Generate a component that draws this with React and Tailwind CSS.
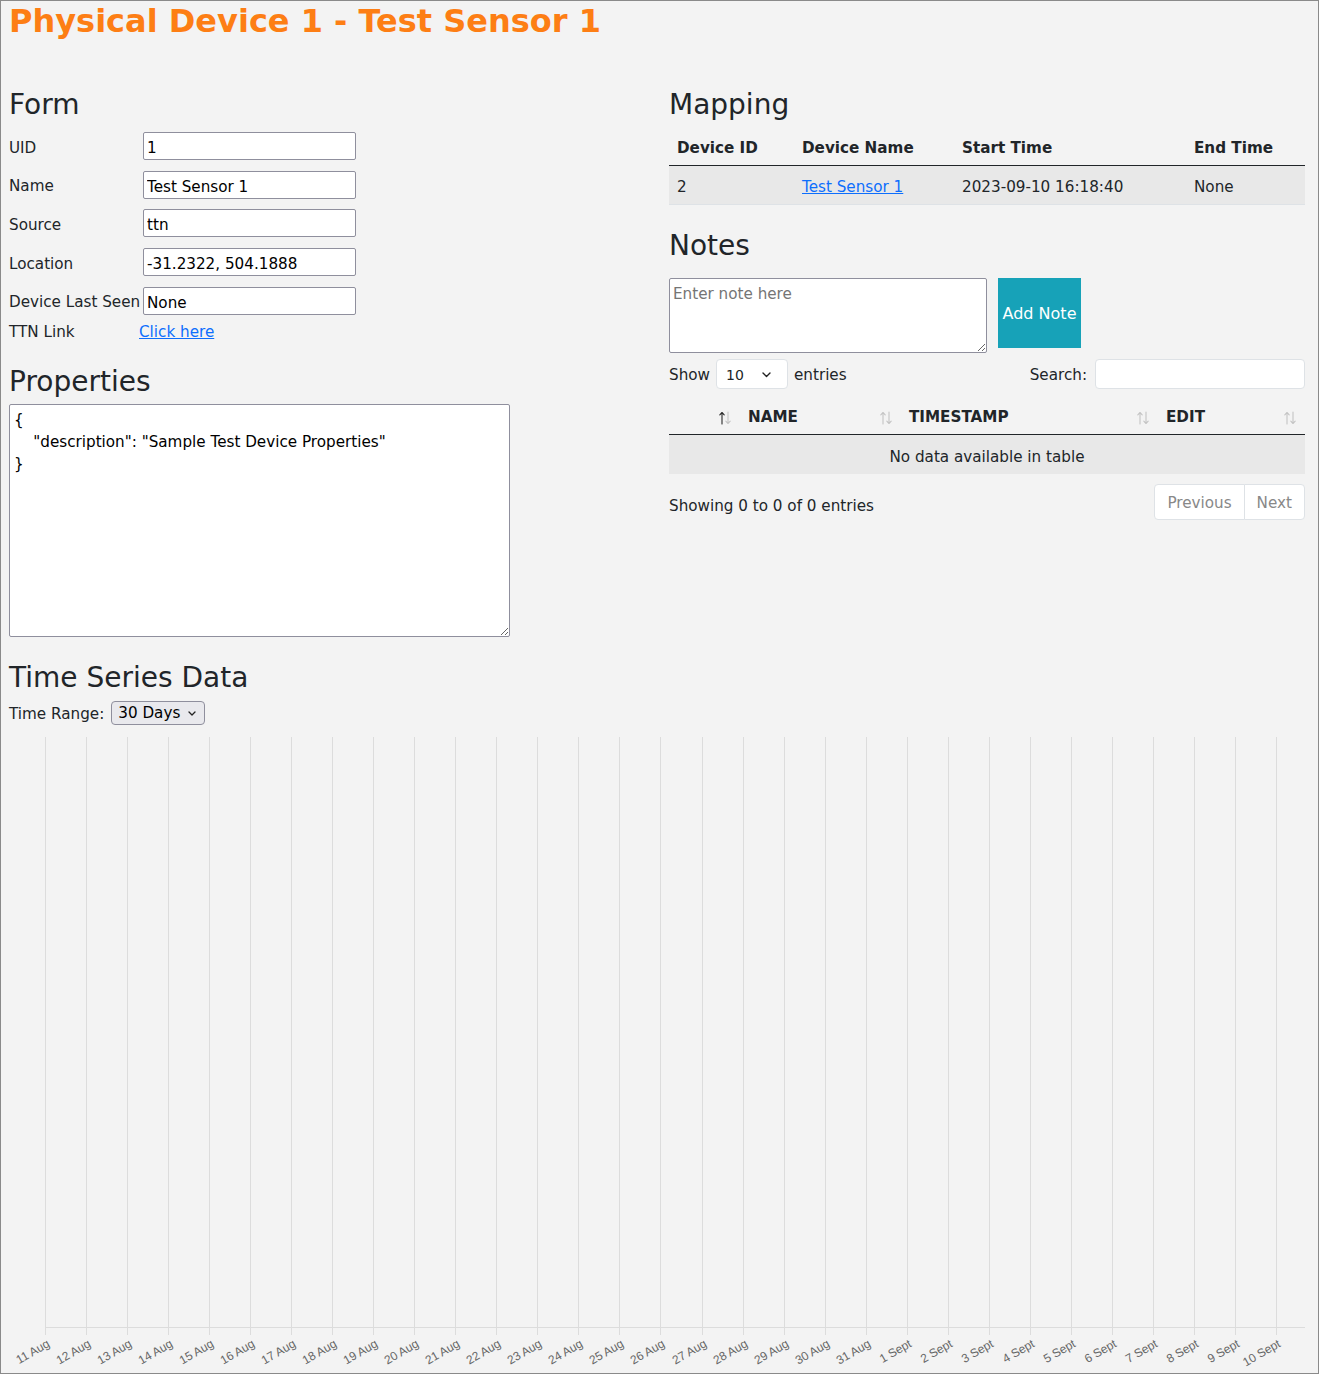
import React from 'react';

const labels = [
  ...Array.from({ length: 21 }, (_, i) => `${i + 11} Aug`),
  ...Array.from({ length: 10 }, (_, i) => `${i + 1} Sept`),
];

const formRows = [
  ['UID', '1'],
  ['Name', 'Test Sensor 1'],
  ['Source', 'ttn'],
  ['Location', '-31.2322, 504.1888'],
  ['Device Last Seen', 'None'],
];

const SortIcon = ({ active }) => (
  <svg width="14" height="14" viewBox="0 0 14 14" className="shrink-0 mt-[2px]">
    <g fill="none" strokeWidth="1.1" strokeLinecap="round" strokeLinejoin="round">
      <path d="M4 13V1.5M1.8 3.8 4 1.5 6.2 3.8" stroke={active ? '#2a2a2a' : '#c4c4c4'} />
      <path d="M10 1v11.5M7.8 10.2 10 12.5 12.2 10.2" stroke="#c4c4c4" />
    </g>
  </svg>
);

const Chevron = () => (
  <svg width="9" height="6" viewBox="0 0 9 6" className="shrink-0">
    <path d="M1 1l3.5 3.5L8 1" fill="none" stroke="#222" strokeWidth="1.4" strokeLinecap="round" strokeLinejoin="round" />
  </svg>
);

const Chart = () => (
  <svg width="1296" height="642" className="block mt-[5px]">
    {labels.map((label, i) => {
      const x = Math.round(36 + i * 41.033) + 0.5;
      return (
        <g key={label}>
          <line x1={x} x2={x} y1={7} y2={605} stroke="#dcdcdc" />
          <text
            transform={`translate(${x + 5} 616) rotate(-30)`}
            textAnchor="end"
            fontSize="12"
            fill="#666"
            fontFamily="'Liberation Sans', Arial, sans-serif"
          >
            {label}
          </text>
        </g>
      );
    })}
    <line x1={36} x2={1296} y1={597.5} y2={597.5} stroke="#dcdcdc" />
  </svg>
);

const App = () => {
  return (
    <div className="h-[1374px] overflow-hidden border border-[#8a8a8a] bg-[#f3f3f3] pl-2 pr-3 font-['DejaVu_Sans',sans-serif] text-[15.2px] leading-[22.8px] text-[#212529]">
      <h1 className="mt-[1px] text-[32px] leading-[38.4px] font-bold text-[#fd7e14]">
        Physical Device 1 - Test Sensor 1
      </h1>

      <div className="mt-[48px] grid grid-cols-[636px_636px] gap-x-6">
        {/* Left column: form and properties */}
        <div>
          <h3 className="text-[28px] leading-[33.6px]">Form</h3>
          <div className="mt-[5px]">
            {formRows.map(([label, value]) => (
              <div key={label} className="grid h-[38.6px] grid-cols-[134px_1fr] items-center">
                <span className="whitespace-nowrap pt-[4px]">{label}</span>
                <input
                  readOnly
                  defaultValue={value}
                  className="h-[28px] w-[213px] rounded-[2px] border border-[#8f8f9d] bg-white px-[3px] pt-[4px] text-black outline-none"
                />
              </div>
            ))}
            <div className="grid h-[24px] grid-cols-[130px_1fr] items-center">
              <span>TTN Link</span>
              <a href="#" className="text-[#0d6efd] underline">Click here</a>
            </div>
          </div>

          <h3 className="mt-[21px] text-[28px] leading-[33.6px]">Properties</h3>
          <textarea
            readOnly
            defaultValue={'{\n    "description": "Sample Test Device Properties"\n}'}
            className="mt-[5.4px] block h-[233px] w-[501px] rounded-[2px] border border-[#8f8f9d] bg-white px-[4px] pt-[4px] leading-[22.2px] text-black outline-none"
          />
        </div>

        {/* Right column: mapping and notes */}
        <div>
          <h3 className="text-[28px] leading-[33.6px]">Mapping</h3>
          <div className="mt-[5.2px]">
            <div className="grid h-[38.8px] grid-cols-[125px_160px_232px_119px] items-center border-b border-[#212529] pt-[4px] font-bold">
              <span className="px-2">Device ID</span>
              <span className="px-2">Device Name</span>
              <span className="px-2">Start Time</span>
              <span className="px-2">End Time</span>
            </div>
            <div className="grid h-[39.3px] grid-cols-[125px_160px_232px_119px] items-center border-b border-[#dee2e6] bg-[#e8e8e8] pt-[4px]">
              <span className="px-2">2</span>
              <span className="px-2"><a href="#" className="text-[#0d6efd] underline">Test Sensor 1</a></span>
              <span className="px-2">2023-09-10 16:18:40</span>
              <span className="px-2">None</span>
            </div>
          </div>

          <h3 className="mt-[23.7px] text-[28px] leading-[33.6px]">Notes</h3>
          <div className="mt-[15.6px] flex items-start gap-[11px]">
            <textarea
              placeholder="Enter note here"
              className="block h-[75px] w-[318px] rounded-[2px] border border-[#8f8f9d] bg-white px-[3px] pt-[3.5px] text-black outline-none placeholder:text-[#757575]"
            />
            <button className="h-[70px] w-[83px] bg-[#17a2b8] pt-[3px] text-[16px] text-white">Add Note</button>
          </div>

          <div className="mt-[6px] flex h-[30px] items-center justify-between">
            <div className="flex items-center">
              <span className="pt-[3px]">Show</span>
              <div className="mx-[6px] flex h-[30px] w-[72px] items-center justify-between rounded-[4px] border border-[#dee2e6] bg-white pl-[9px] pr-[16px] pt-[2px] text-[14px]">
                <span>10</span>
                <Chevron />
              </div>
              <span className="pt-[3px]">entries</span>
            </div>
            <div className="flex items-center gap-2">
              <span className="pt-[3px]">Search:</span>
              <input className="h-[30px] w-[210px] rounded-[4px] border border-[#dee2e6] bg-white outline-none" />
            </div>
          </div>

          <div className="mt-[6.2px]">
            <div className="grid h-[39.8px] grid-cols-[71px_161px_257px_147px] items-center border-b border-[#212529] pt-[5px] font-bold">
              <div className="flex justify-end px-2"><SortIcon active /></div>
              <div className="flex items-center justify-between px-2"><span>NAME</span><SortIcon /></div>
              <div className="flex items-center justify-between px-2"><span>TIMESTAMP</span><SortIcon /></div>
              <div className="flex items-center justify-between px-2"><span>EDIT</span><SortIcon /></div>
            </div>
            <div className="flex h-[39.3px] items-center justify-center bg-[#e8e8e8] pt-[5px]">No data available in table</div>
          </div>

          <div className="mt-[10px] flex items-start justify-between">
            <span className="pt-[11px]">Showing 0 to 0 of 0 entries</span>
            <div className="flex text-[#888]">
              <span className="rounded-l-[4px] border border-[#dee2e6] bg-white px-3 pt-[7px] pb-[4px]">Previous</span>
              <span className="-ml-px rounded-r-[4px] border border-[#dee2e6] bg-white px-3 pt-[7px] pb-[4px]">Next</span>
            </div>
          </div>
        </div>
      </div>

      <h3 className="mt-[23.6px] text-[28px] leading-[33.6px]">Time Series Data</h3>
      <div className="mt-[6.5px] flex h-[24.3px] items-center gap-[7px]">
        <span className="pt-[3px]">Time Range:</span>
        <div className="flex h-[24.3px] items-center gap-[8px] rounded-[4px] border border-[#8f8f9d] bg-[#e9e9ed] pl-[6px] pr-[8px] pt-[2px] text-black">
          <span>30 Days</span>
          <svg width="8" height="5" viewBox="0 0 8 5"><path d="M1 1l3 3 3-3" fill="none" stroke="#222" strokeWidth="1.3" strokeLinecap="round" strokeLinejoin="round" /></svg>
        </div>
      </div>

      <Chart />
    </div>
  );
};

export default App;
